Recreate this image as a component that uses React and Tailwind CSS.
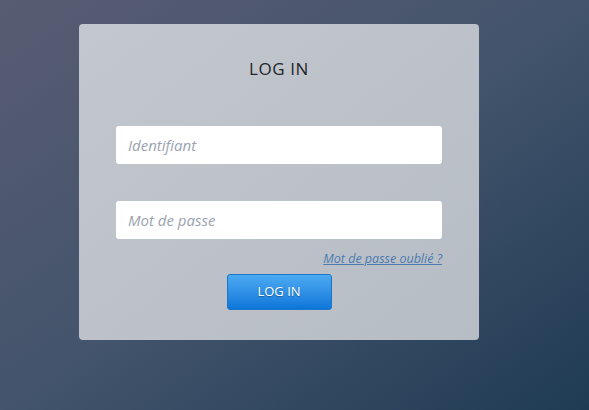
export default function App() {
  return (
    <main className="h-[410px] w-full overflow-hidden bg-gradient-to-br from-[#585c72] via-[#43546c] to-[#1f3b54] pl-[79px] pt-[24px] font-['Open_Sans',sans-serif]">
      <div className="w-[400px] rounded-[4px] bg-gradient-to-br from-[#c3c7ce] to-[#b7bdc5] px-[37px] pt-[34px] pb-[30px]">
        <h1 className="text-center text-[17px] leading-[22px] font-medium tracking-[0.6px] text-[#232529]">LOG IN</h1>

        <input
          type="text"
          placeholder="Identifiant"
          className="mt-[46px] block h-[38px] w-full rounded-[3px] bg-white px-[12px] text-[15px] italic text-[#555] placeholder:text-[#9aa3af] outline-none"
        />
        <input
          type="password"
          placeholder="Mot de passe"
          className="mt-[37px] block h-[38px] w-full rounded-[3px] bg-white px-[12px] text-[15px] italic text-[#555] placeholder:text-[#9aa3af] outline-none"
        />

        <div className="mt-[11px] flex justify-end">
          <a href="#" className="text-[12.5px] leading-[17px] italic text-[#4b7bb0] underline">
            Mot de passe oublié ?
          </a>
        </div>

        <div className="mt-[7px] flex justify-center">
          <button className="h-[36px] w-[105px] rounded-[3px] border border-[#1e74c6] bg-gradient-to-b from-[#4caaf2] to-[#0a76d9] text-[13px] text-white [text-shadow:0_1px_1px_rgba(0,0,0,0.3)]">
            LOG IN
          </button>
        </div>
      </div>
    </main>
  );
}
